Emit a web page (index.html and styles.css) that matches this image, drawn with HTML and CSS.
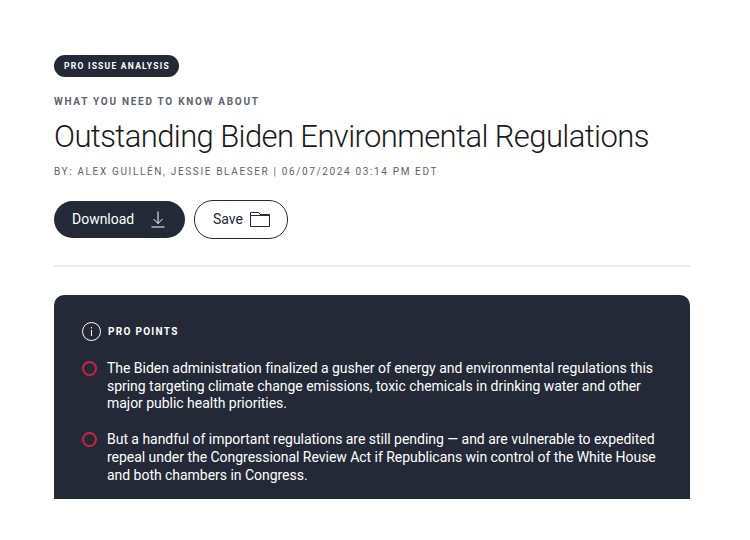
FILE: index.html
```html
<!DOCTYPE html>
<html lang="en">
<head>
<meta charset="utf-8">
<title>Outstanding Biden Environmental Regulations</title>
<link rel="stylesheet" href="styles.css">
</head>
<body>
<main class="page">
  <span class="badge">PRO ISSUE ANALYSIS</span>
  <p class="eyebrow">WHAT YOU NEED TO KNOW ABOUT</p>
  <h1 class="title">Outstanding Biden Environmental Regulations</h1>
  <p class="byline">BY: ALEX GUILLÉN, JESSIE BLAESER | 06/07/2024 03:14 PM EDT</p>
  <div class="actions">
    <a class="btn btn-dark">Download
      <svg class="icon-dl" width="14" height="17" viewBox="0 0 14 17" fill="none" stroke="#fff" stroke-width="1"><path d="M7 0.5V12.5M2.5 8L7 12.5L11.5 8M0.5 16H13.5"/></svg>
    </a>
    <a class="btn btn-light">Save
      <svg width="20" height="15" viewBox="0 0 20 15" fill="none" stroke="#232937" stroke-width="1"><path d="M0.5 14.5V0.5H9L10 2.5H19.5V14.5ZM0.5 3.5H19.5"/></svg>
    </a>
  </div>
  <hr class="rule">
  <section class="card">
    <h2 class="card-head">
      <svg width="19" height="19" viewBox="0 0 19 19" fill="none" stroke="#fff" stroke-width="1"><circle cx="9.5" cy="9.5" r="9"/><path d="M9.5 8V14M9.5 5V6.5"/></svg>
      PRO POINTS
    </h2>
    <ul class="points">
      <li>The Biden administration finalized a gusher of energy and environmental regulations this spring targeting climate change emissions, toxic chemicals in drinking water and other major public health priorities.</li>
      <li>But a handful of important regulations are still pending — and are vulnerable to expedited repeal under the Congressional Review Act if Republicans win control of the White House and both chambers in Congress.</li>
    </ul>
  </section>
</main>
</body>
</html>
```
FILE: styles.css
```css
* { box-sizing: border-box; }
html, body { margin: 0; background: #fff; }
body { font-family: Roboto, "Liberation Sans", sans-serif; color: #232937; }
.page { width: 636px; height: 499px; margin-left: 54px; padding-top: 55px; overflow: hidden; }
.badge { display: block; width: 125px; height: 22px; border-radius: 11px; background: #232937; color: #fff; font-size: 8.5px; font-weight: 700; letter-spacing: 1.25px; line-height: 22px; padding-left: 10px; white-space: nowrap; }
.eyebrow { margin: 19px 0 0; font-size: 10px; font-weight: 700; letter-spacing: 1.72px; line-height: 12px; color: #5e6270; }
.title { margin: 10px 0 0; font-size: 31px; font-weight: 300; line-height: 38px; color: #1a1a1a; white-space: nowrap; letter-spacing: -0.6px; }
.byline { margin: 10px 0 0; font-size: 10px; letter-spacing: 1.64px; line-height: 12px; color: #5e6270; white-space: nowrap; }
.actions { display: flex; gap: 9px; margin-top: 22px; align-items: center; }
.btn { display: flex; align-items: center; border-radius: 19px; font-size: 14px; line-height: 18px; }
.btn-dark { width: 131px; height: 37px; padding: 0 0 1px 18px; background: #232937; color: #fff; gap: 17px; letter-spacing: -0.02px; }
.btn-light { width: 94px; height: 39px; padding: 0 0 1px 18px; border: 1px solid #232937; color: #232937; gap: 7px; }
.rule { height: 2px; margin: 26px 0 0; border: 0; background: #ececf1; }
.card { height: 260px; margin-top: 28px; padding: 26px 28px 0; background: #232937; border-radius: 10px 10px 0 0; color: #fff; }
.card-head { display: flex; align-items: center; gap: 7px; margin: 0; height: 20px; font-size: 10px; font-weight: 700; letter-spacing: 1.3px; }
.points { list-style: none; margin: 19px 0 0; padding: 0; }
.points li { position: relative; padding-left: 25px; margin-bottom: 18px; font-size: 14px; line-height: 17.7px; letter-spacing: -0.03px; }
.points li::before { content: ""; position: absolute; left: 0; top: 1px; width: 11px; height: 11px; border: 2px solid #d3203c; border-radius: 50%; }
```
